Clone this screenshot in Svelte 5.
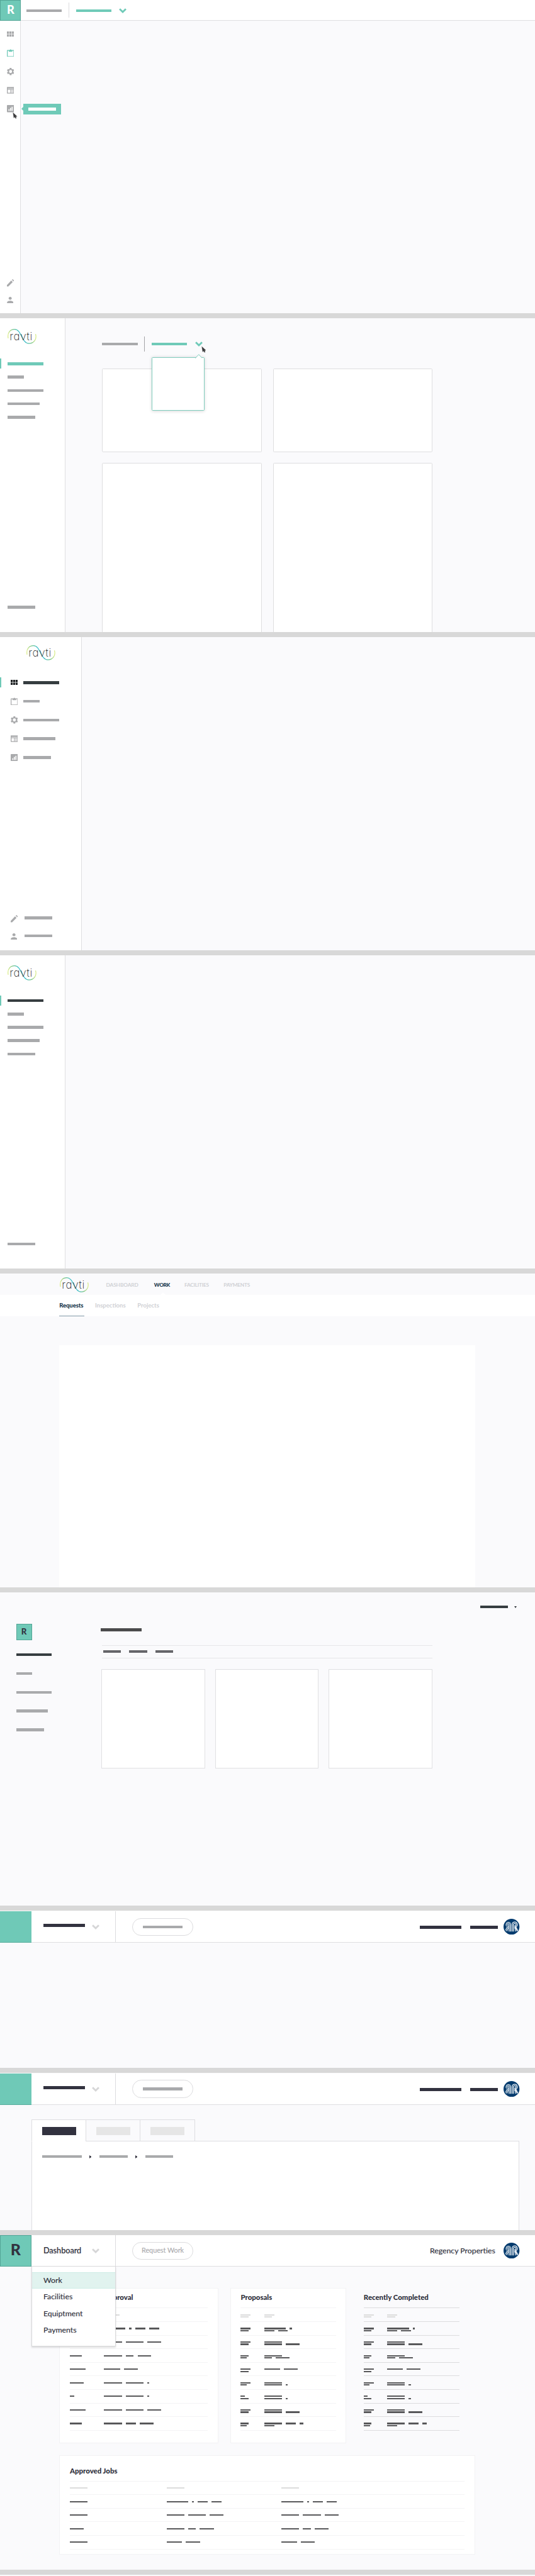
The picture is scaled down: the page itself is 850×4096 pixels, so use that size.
<script>
  const navWidths = [68, 31, 68, 61, 53];
  const navIcons = ['grid', 'clipboard', 'gear', 'web', 'chart'];

  // Each cell is a list of lines, each line a list of word widths.
  const wait = [
    [[[22]], [[41, 4, 19, 19.5]]],
    [[[30]], [[34, 34, 27]]],
    [[[22.5]], [[34, 15.5, 26.5]]],
    [[[30]], [[30.5, 26.5]]],
    [[[26.5]], [[34, 34, 4]]],
    [[[8]], [[34, 34, 4]]],
    [[[30.5]], [[34, 34, 27]]],
    [[[22.5]], [[34, 19.5, 26.5]]]
  ];
  const proposals = [
    [[[19], [15]], [[41.5, 4], [19, 19]]],
    [[[19], [15]], [[34], [34, 26.5]]],
    [[[15], [11.5]], [[34], [15, 26.5]]],
    [[[19], [15]], [[30, 26.5]]],
    [[[19], [11.5]], [[34], [34, 4]]],
    [[[7.5], [15]], [[34], [34, 4]]],
    [[[19], [15]], [[34], [34, 26.5]]],
    [[[15], [12]], [[34, 19, 7.5], [19]]]
  ];
  const jobs = [
    [[[34]], [[41.5, 4, 19, 19]], [[41.5, 4, 19, 19]]],
    [[[34]], [[34, 34, 27]], [[34, 34, 27]]],
    [[[26.5]], [[34, 15, 27]], [[34, 15, 27]]],
    [[[34]], [[30, 27]], [[30, 27]]]
  ];
  const waitHead = [[[30]], [[30]]];
  const pairHead = [[[19], [15]], [[19], [15]]];
  const jobsHead = [[[34]], [[34]], [[34]]];
</script>

{#snippet bar(w, tone = 'grey')}
  <span class="bar {tone}" style="width:{w}px"></span>
{/snippet}

{#snippet icon(name)}
  {#if name === 'grid'}
    <svg class="icon" width="13.5" height="10" viewBox="4 5 17 13" preserveAspectRatio="none"><path d="M4 11h5V5H4v6zm0 7h5v-6H4v6zm6 0h5v-6h-5v6zm6 0h5v-6h-5v6zm-6-7h5V5h-5v6zm6-6v6h5V5h-5z" /></svg>
  {:else if name === 'clipboard'}
    <svg class="icon" width="14" height="15" viewBox="0 0 14 15"><path fill-rule="evenodd" d="M1 1.8h4.4a1.7 1.7 0 0 1 3.2 0H13a1 1 0 0 1 1 1V14a1 1 0 0 1-1 1H1a1 1 0 0 1-1-1V2.8a1 1 0 0 1 1-1zM1.5 3.3v10.2h11V3.3h-1.7L10 5H4l-.8-1.7z" /></svg>
  {:else if name === 'gear'}
    <svg class="icon" width="14" height="14" viewBox="2 2 20 20"><path d="M19.43 12.98c.04-.32.07-.64.07-.98s-.03-.66-.07-.98l2.11-1.65c.19-.15.24-.42.12-.64l-2-3.46c-.12-.22-.39-.3-.61-.22l-2.49 1c-.52-.4-1.08-.73-1.69-.98l-.38-2.65C14.46 2.18 14.25 2 14 2h-4c-.25 0-.46.18-.49.42l-.38 2.65c-.61.25-1.17.59-1.69.98l-2.49-1c-.23-.09-.49 0-.61.22l-2 3.46c-.13.22-.07.49.12.64l2.11 1.65c-.04.32-.07.65-.07.98s.03.66.07.98l-2.11 1.65c-.19.15-.24.42-.12.64l2 3.46c.12.22.39.3.61.22l2.49-1c.52.4 1.08.73 1.69.98l.38 2.65c.03.24.24.42.49.42h4c.25 0 .46-.18.49-.42l.38-2.65c.61-.25 1.17-.59 1.69-.98l2.49 1c.23.09.49 0 .61-.22l2-3.46c.12-.22.07-.49-.12-.64l-2.11-1.65zM12 16.2a4.2 4.2 0 1 1 0-8.4 4.2 4.2 0 0 1 0 8.4z" /></svg>
  {:else if name === 'web'}
    <svg class="icon" width="14" height="13" viewBox="0 0 14 13"><path fill-rule="evenodd" d="M0 1 1.2 0l1.1 1 1.2-1 1.2 1L5.8 0 7 1l1.2-1 1.2 1 1.1-1 1.2 1 1.1-1L14 1v11.2a.8.8 0 0 1-.8.8H.8a.8.8 0 0 1-.8-.8zM1.6 3.2v1.3h10.8V3.2zM1.6 5.8v5.6h4.9V5.8zM7.5 5.8v5.6h4.9V5.8z" /><path opacity=".4" d="M1.6 3.2h10.8v1.3H1.6zM7.5 5.8h4.9v5.6H7.5z" /></svg>
  {:else if name === 'chart'}
    <svg class="icon" width="14" height="14" viewBox="0 0 14 14"><path fill-rule="evenodd" d="M1.2 0h11.6A1.2 1.2 0 0 1 14 1.2v11.6a1.2 1.2 0 0 1-1.2 1.2H1.2A1.2 1.2 0 0 1 0 12.8V1.2A1.2 1.2 0 0 1 1.2 0zM3 8v3.2h2V8zm3-2.5v5.7h2V5.5zM9 3.3v7.9h2V3.3z" /></svg>
  {:else if name === 'pencil'}
    <svg class="icon" width="13.5" height="14" viewBox="3 3 18 18" preserveAspectRatio="none"><path d="M3 17.25V21h3.75L17.81 9.94l-3.75-3.75L3 17.25zM20.71 7.04c.39-.39.39-1.02 0-1.41l-2.34-2.34c-.39-.39-1.02-.39-1.41 0l-1.2 1.2 3.75 3.75 1.2-1.2z" /></svg>
  {:else if name === 'user'}
    <svg class="icon" width="12.5" height="12" viewBox="4 4 16 16"><path d="M12 11.5c2.21 0 4-1.6 4-3.7S14.21 4 12 4 8 5.7 8 7.8s1.79 3.7 4 3.7zm0 2.5c-2.67 0-8 1.34-8 4v2h16v-2c0-2.66-5.33-4-8-4z" /></svg>
  {/if}
{/snippet}

{#snippet chevron(kind)}
  <svg class="chev {kind}" width="14.5" height="10" viewBox="0 0 14.5 10"><path d="M1.3 1.6 7.25 7.3l5.95-5.7" fill="none" stroke-width="3.4" /></svg>
{/snippet}

{#snippet cursor()}
  <svg width="9.5" height="13" viewBox="0 0 9.5 13"><path fill="#3b3b3d" stroke="#fff" stroke-width=".5" d="M.3.3 2 12.1l2.1-1.9 1.2 2.5 2.3-.3-.7-3.2 2.3-.6z" /></svg>
{/snippet}

{#snippet logo(id)}
  <svg class="logo" width="55.5" height="29" viewBox="0 0 55.5 29">
    <defs>
      <linearGradient id="sw{id}" x1="0" x2="1" y1="0" y2="0">
        <stop offset="0" stop-color="#dcec86" />
        <stop offset=".14" stop-color="#7cc57f" />
        <stop offset=".38" stop-color="#3cbfcc" />
        <stop offset=".62" stop-color="#38bbc8" />
        <stop offset=".86" stop-color="#7cc57f" />
        <stop offset="1" stop-color="#dcec86" />
      </linearGradient>
    </defs>
    <path d="M1.2 18C-1 6 6 .9 13.500.9 27 .9 27 28 41 28c8 0 16-7 12.600-18" fill="none" stroke="url(#sw{id})" stroke-width="1.5" />
    <text x="4" y="21.2" textLength="43.5" lengthAdjust="spacing">ravti</text>
  </svg>
{/snippet}

{#snippet crest()}
  <svg class="crest" width="30.5" height="30.5" viewBox="0 0 30 30">
    <circle cx="15" cy="15" r="15" fill="#023a6d" />
    <g fill="none" stroke="#e8eef4" stroke-width="1.15">
      <path d="M13.9 24V11a4.7 4.7 0 0 0-9.4 0c0 2 1 3.3 2.3 4.1L3.5 21.5M12.1 24V11a2.9 2.9 0 0 0-5.8 0c0 1.7 1.3 2.9 2.9 2.9L4.6 23M10.3 24V11a1.1 1.1 0 1 0-1.3 1.1M10 15.5 6.5 23.5" />
      <path stroke-width="1.5" d="M16.3 24V11a4.8 4.8 0 1 1 7 4.2l3.5 7.3M18.7 24V11a2.4 2.4 0 1 1 2.4 2.5l4.7 10M20.6 16l1.4 3 .8 4.8" />
    </g>
  </svg>
{/snippet}

{#snippet sideNav(first)}
  <aside class="side narrow">
    <div class="logo-slot">{@render logo(first)}</div>
    <nav>
      {#each navWidths as w, i}
        <div class="nav-item" class:on={i === 0}>{@render bar(w, i === 0 ? first : 'grey')}</div>
      {/each}
    </nav>
    <div class="side-foot">{@render bar(53)}</div>
  </aside>
{/snippet}

{#snippet barHeader()}
  <header class="top">
    <div class="tile"></div>
    <div class="switch">{@render bar(79.5, 'ink')}{@render chevron('pale')}</div>
    <div class="pill">{@render bar(75.5)}</div>
    <div class="who">{@render bar(79.5, 'ink')}{@render bar(53, 'ink')}{@render crest()}</div>
  </header>
{/snippet}

{#snippet row(cells, tone)}
  <div class="row">
    {#each cells as lines}
      <div class="cell">
        {#each lines as words}
          <div class="line">
            {#each words as w}<i class={tone} style="width:{w}px"></i>{/each}
          </div>
        {/each}
      </div>
    {/each}
  </div>
{/snippet}

{#snippet table(head, rows)}
  <div class="table">
    {@render row(head, 'faint')}
    {#each rows as r}{@render row(r, 'dark')}{/each}
  </div>
{/snippet}

<main>
  <!-- Icon rail with tooltip -->
  <section class="frame f1">
    <header class="f1-head">
      <div class="brand">R</div>
      <div class="crumb">{@render bar(68)}</div>
      <div class="crumb sel">{@render bar(68, 'green')}{@render chevron('green')}</div>
    </header>
    <aside class="rail">
      <div class="rail-top">
        {#each navIcons as name}
          <span class="rail-icon" class:active={name === 'clipboard'}>{@render icon(name)}</span>
        {/each}
      </div>
      <div class="rail-foot">{@render icon('pencil')}{@render icon('user')}</div>
      <div class="tip">{@render bar(53.5, 'white')}</div>
      <div class="ptr">{@render cursor()}</div>
    </aside>
  </section>

  <!-- Sidebar with popover and cards -->
  <section class="frame f2">
    {@render sideNav('green')}
    <div class="f2-main">
      <div class="f2-head">
        {@render bar(68)}
        <span class="sep"></span>
        <div class="picker">
          {@render bar(68, 'green')}{@render chevron('green')}
          <div class="pop">
            <svg width="14" height="8" viewBox="0 0 14 8"><path d="M0 7.5h.8L7 .8l6.2 6.7h.8" fill="#fff" stroke="#7fcdbd" stroke-width="1.2" /></svg>
          </div>
          <div class="ptr2">{@render cursor()}</div>
        </div>
      </div>
      <div class="f2-grid"><div></div><div></div><div></div><div></div></div>
    </div>
  </section>

  <!-- Wide sidebar -->
  <section class="frame">
    <aside class="side wide">
      <div class="logo-slot">{@render logo('wide')}</div>
      <nav>
        {#each navWidths as w, i}
          <div class="icon-row" class:on={i === 0}><span class="ic">{@render icon(navIcons[i])}</span>{@render bar(w, i === 0 ? 'slate' : 'grey')}</div>
        {/each}
      </nav>
      <div class="wide-foot">
        <div>{@render icon('pencil')}{@render bar(53)}</div>
        <div>{@render icon('user')}{@render bar(53)}</div>
      </div>
    </aside>
  </section>

  <!-- Text-only sidebar -->
  <section class="frame">{@render sideNav('slate')}</section>

  <!-- Two-level top navigation -->
  <section class="frame f5">
    <header class="f5-head">
      {@render logo('top')}
      <nav><span class="n1">DASHBOARD</span><span class="n2 cur">WORK</span><span class="n3">FACILITIES</span><span class="n4">PAYMENTS</span></nav>
    </header>
    <nav class="sub"><span class="s1 cur">Requests</span><span class="s2">Inspections</span><span>Projects</span></nav>
    <div class="sheet"></div>
  </section>

  <!-- Borderless layout -->
  <section class="frame f6">
    <div class="account">{@render bar(53, 'slate')}<span class="tri"></span></div>
    <div class="f6-body">
      <aside>
        <div class="badge">R</div>
        {#each navWidths as w, i}{@render bar(w, i === 0 ? 'slate' : 'grey')}{/each}
      </aside>
      <div class="f6-main">
        {@render bar(79, 'char')}
        <div class="f6-tabs"><i></i><i></i><i></i></div>
        <div class="f6-cards"><div></div><div></div><div></div></div>
      </div>
    </div>
  </section>

  <!-- Top bar -->
  <section class="frame f7">{@render barHeader()}</section>

  <!-- Top bar with tabs -->
  <section class="frame f8">
    {@render barHeader()}
    <div class="tabs">
      <div class="tab cur"><i></i></div><div class="tab"><i></i></div><div class="tab"><i></i></div><span class="rest"></span>
    </div>
    <div class="panel">
      {@render bar(76.5)}<span class="arr"></span>{@render bar(54)}<span class="arr"></span>{@render bar(53.5)}
    </div>
  </section>

  <!-- Dashboard -->
  <section class="frame f9">
    <header class="top">
      <div class="tile letter">R</div>
      <div class="switch">
        <span class="t-dash">Dashboard</span>{@render chevron('pale')}
        <div class="menu">
          <span class="hot">Work</span><span>Facilities</span><span>Equiptment</span><span>Payments</span>
        </div>
      </div>
      <div class="pill"><span class="t-req">Request Work</span></div>
      <div class="who"><span class="t-reg">Regency Properties</span>{@render crest()}</div>
    </header>
    <div class="trio">
      <div class="card c1"><h2>Waiting Approval</h2>{@render table(waitHead, wait)}</div>
      <div class="card c2"><h2>Proposals</h2>{@render table(pairHead, proposals)}</div>
      <div class="card c3"><h2>Recently Completed</h2>{@render table(pairHead, proposals)}</div>
    </div>
    <div class="card c4"><h2>Approved Jobs</h2>{@render table(jobsHead, jobs)}</div>
  </section>
</main>

<style>
  :global(body) { margin: 0; background: #fafafc; }
  main {
    zoom: 0.83008;
    width: 1024px;
    height: 4934px;
    overflow: hidden;
    background: #fafafc;
    font-family: Lato, "Liberation Sans", sans-serif;
    color: #2f303c;
  }
  main :global(*) { box-sizing: border-box; }
  svg { display: block; flex: none; }

  .frame { height: 610px; border-bottom: 10px solid #d8d8d8; overflow: hidden; position: relative; display: flex; }

  .bar { display: block; flex: none; height: 5.5px; background: #a9aaac; }
  .bar.green { background: #6fcab8; }
  .bar.slate { background: #363d40; }
  .bar.ink { background: #32323f; height: 6px; }
  .bar.char { background: #4b4b4c; height: 6px; }
  .bar.white { background: #fff; }
  .icon { fill: #a9aaac; }
  .chev path { stroke: #6fcab8; }
  .chev.pale path { stroke: #d6d6d7; }
  .logo text { font-family: Inter, Lato, sans-serif; font-weight: 200; font-size: 20.5px; font-feature-settings: "cv11"; fill: #1c1c1e; }

  /* icon rail */
  .f1 { flex-direction: column; }
  .f1-head { height: 40px; flex: none; display: flex; align-items: stretch; background: #fff; border-bottom: 1px solid #dfdfe1; }
  .brand { width: 40px; height: 40px; border: 2px solid #53a596; background: #6fc9b7; color: #fff; font: 900 22px/35px Lato, sans-serif; text-align: center; padding-left: 1px; }
  .crumb { display: flex; align-items: center; padding: 2px 0 0 10px; }
  .crumb.sel { margin: 5px 0 5px 13px; padding: 2px 0 0 13px; border-left: 1px solid #dcdcde; gap: 15px; }
  .rail { position: relative; flex: 1; width: 40px; background: #fff; border-right: 1px solid #dfdfe1; display: flex; flex-direction: column; justify-content: space-between; padding: 18px 0 19.5px 13px; }
  .rail-top { display: flex; flex-direction: column; gap: 20.8px; }
  .rail-icon { height: 15px; display: flex; align-items: center; }
  .active .icon { fill: #6fc9b7; }
  .rail-foot { display: flex; flex-direction: column; gap: 20px; }
  .tip { position: absolute; left: 45px; top: 159px; width: 72px; height: 20px; background: #6fcab8; display: flex; align-items: center; padding-left: 9px; }
  .tip::before { content: ""; position: absolute; left: -4px; top: 6px; border: 4px solid transparent; border-left: 0; border-right-color: #6fcab8; }
  .ptr { position: absolute; left: 24.5px; top: 174.5px; }

  /* sidebars */
  .side { flex: none; background: #fff; border-right: 1px solid #dfdfe1; display: flex; flex-direction: column; }
  .narrow { width: 125px; }
  .narrow .logo-slot { padding: 19.5px 0 0 15px; height: 77px; }
  .nav-item { height: 19px; display: flex; align-items: center; padding: .6px 0 0 15px; margin-bottom: 6.6px; }
  .nav-item.on { border-left: 2.5px solid #6fc9b7; padding-left: 12.5px; }
  .side-foot { margin-top: auto; padding: 0 0 44.6px 15px; }
  .wide { width: 157px; }
  .wide .logo-slot { padding: 15.5px 0 0 50px; height: 78px; }
  .icon-row { height: 19px; display: flex; align-items: center; gap: 11px; padding-left: 20px; margin-bottom: 16.9px; }
  .icon-row.on { border-left: 2.5px solid #6fc9b7; padding-left: 17.5px; }
  .icon-row.on .icon { fill: #1d2022; }
  .icon-row.on .bar { margin-top: 1px; }
  .ic { width: 14px; }
  .wide-foot { margin-top: auto; padding: 0 0 19px 20.5px; display: grid; gap: 20px; }
  .wide-foot div { display: flex; align-items: center; gap: 13px; height: 14px; }
  .wide-foot .bar { margin-top: -4px; }
  .wide-foot div + div .bar { margin-left: 1px; }

  /* popover and cards */
  .f2-main { flex: 1; padding: 34.5px 0 0 70.5px; display: flex; flex-direction: column; }
  .f2-head { display: flex; align-items: center; height: 30px; margin-bottom: 32.5px; }
  .sep { width: 1px; height: 29px; background: #a3a3a6; margin: 0 13px 0 12.5px; }
  .picker { position: relative; display: flex; align-items: center; gap: 15px; }
  .pop { position: absolute; left: 0; top: 30.5px; width: 102px; height: 102px; background: #fff; border: 1px solid #7fcdbd; border-radius: 2px; box-shadow: 0 1px 6px rgba(0,0,0,.16); }
  .pop svg { position: absolute; left: 82px; top: -7.5px; }
  .ptr2 { position: absolute; left: 95px; top: 9px; }
  .f2-grid { display: grid; grid-template-columns: 305.5px 305.5px; grid-template-rows: 160px 340px; gap: 20.5px 21.5px; }
  .f2-grid div { background: #fff; border: 1px solid #dedee0; border-radius: 2px; }

  /* two-level navigation */
  .f5 { flex-direction: column; }
  .f5-head { height: 41px; flex: none; display: flex; padding: 6.5px 0 0 114.5px; }
  .f5-head nav { display: flex; padding: 8.8px 0 0 33px; font: 700 10px/14px Lato, sans-serif; color: #d0d1d5; }
  .n1 { width: 92px; letter-spacing: -.12px; }
  .n2 { width: 58px; }
  .n3 { width: 75px; letter-spacing: -.3px; }
  .n4 { letter-spacing: -.3px; }
  .cur { color: #17364a; }
  .n2 { position: relative; font-weight: 900; letter-spacing: -.4px; }
  .n2::after { content: ""; position: absolute; left: 12px; top: 21px; border: 5px solid transparent; border-top: 0; border-bottom-color: #fff; }
  .sub { height: 40px; flex: none; background: #fff; display: flex; padding-left: 113.5px; font: 700 11.5px/41px Lato, sans-serif; color: #d0d1d5; }
  .sub span { height: 40.5px; }
  .s1 { border-bottom: 2px solid #8199a6; width: 48.5px; margin-right: 20px; letter-spacing: -.1px; font-weight: 900; }
  .s2 { width: 81px; }
  .sheet { margin: 55.5px 0 0 113.5px; width: 796.5px; flex: 1; background: #fff; }

  /* borderless layout */
  .f6 { flex-direction: column; }
  .account { display: flex; align-items: center; gap: 12.5px; padding: 25px 0 0 919px; height: 31px; flex: none; }
  .tri { border: 3px solid transparent; border-top: 4.5px solid #363d40; border-bottom: 0; margin-top: 2px; }
  .f6-body { display: flex; padding: 29.5px 0 0 31px; }
  .f6-body aside { width: 161.5px; display: flex; flex-direction: column; gap: 30.5px; }
  .badge { width: 30px; height: 31px; margin-bottom: -5px; border: 1.5px solid #53a596; background: #6fc9b7; color: #32323f; font: 900 16px/28px Lato, sans-serif; text-align: center; }
  .f6-main { padding-top: 9px; }
  .f6-tabs { margin: 26px 0 0 3px; width: 632px; height: 25px; border: solid #e6e6e8; border-width: 1.5px 0; display: flex; gap: 16px; padding: 9px 0 0 2px; }
  .f6-tabs i { width: 34px; height: 4px; background: #66666a; }
  .f6-cards { display: grid; grid-template-columns: repeat(3, 198px); gap: 19.5px; margin: 21px 0 0 2px; }
  .f6-cards div { height: 190px; background: #fff; border: 1px solid #e0e0e3; }

  /* shared top bar */
  .top { height: 60.5px; flex: none; background: #fff; border-bottom: 1px solid #dfdfe1; display: flex; }
  .tile { width: 60px; height: 60.5px; background: #6fc9b7; border-bottom: 1px solid #58ad9c; }
  .tile.letter { border: 2px solid #53a596; font: 900 30px/51px Lato, sans-serif; color: #32323f; text-align: center; height: 60px; }
  .switch { position: relative; width: 161.5px; border-right: 1px solid #dcdcde; display: flex; padding-left: 23px; align-items: flex-start; }
  .switch .bar { margin: 25px 13.5px 0 0; }
  .switch .chev { margin-top: 25.5px; }
  .pill { width: 117px; height: 34.5px; margin: 13px 0 0 31.5px; border: 1px solid #dcdcde; border-radius: 18px; display: flex; align-items: center; justify-content: center; }
  .who { margin-left: auto; padding-right: 29.5px; display: flex; align-items: center; }
  .who .bar { margin: 2px 17px 0 0; }
  .who .bar + .bar { margin-right: 11px; }
  .f7 { height: 311px; flex-direction: column; padding-top: .8px; }
  .f8 { height: 310.5px; flex-direction: column; padding-top: .5px; }

  .tabs { display: flex; margin: 28.5px 30px 0 60px; flex: none; height: 42px; }
  .tab { width: 104px; border: solid #dedee1; border-width: 1px 0 1px 1px; display: flex; padding: 13px 0 0 19px; }
  .tab i { width: 65px; height: 15.5px; background: #e6e6e6; }
  .tab.cur { background: #fff; border-bottom-color: #fff; }
  .tab.cur i { background: #32323f; }
  .rest { flex: 1; border: solid #dedee1; border-width: 0 0 1px 1px; }
  .panel { margin: 0 30px 0 60px; flex: 1; background: #fff; border: solid #dedee1; border-width: 0 1px; display: flex; padding: 26px 0 0 19px; }
  .arr { margin: 0 15.5px 0 14.5px; height: 6px; border: 3px solid transparent; border-left: 4px solid #32323f; border-right: 0; }

  /* dashboard */
  .f9 { height: 651px; flex-direction: column; }
  .t-dash { width: 92.5px; font: 500 15.2px/24px Lato, sans-serif; padding-top: 18px; -webkit-text-stroke: .2px; }
  .t-req { font: 13px/18px Lato, sans-serif; color: #adadb0; white-space: nowrap; margin-top: -2px; -webkit-text-stroke: .2px; }
  .t-reg { font: 14.8px/20px Lato, sans-serif; margin: 3px 16px 0 0; white-space: nowrap; -webkit-text-stroke: .2px; }
  .menu { position: absolute; z-index: 2; left: 0; top: 59.5px; width: 162px; height: 154px; background: #fff; border: 1px solid #d9d9db; box-shadow: 0 2px 3px rgba(0,0,0,.13); padding-top: 10px; display: flex; flex-direction: column; }
  .menu span { height: 32px; line-height: 31px; padding-left: 22px; font-size: 14.8px; -webkit-text-stroke: .2px; }
  .menu .hot { background: #e1f3ef; box-shadow: inset 0 1px #c6eae2, inset 0 -1px #c6eae2; }
  .trio { display: flex; padding: 40.5px 0 0 113.5px; }
  .card { background: #fff; border: 1px solid #f2f2f4; }
  .trio .card { height: 298px; padding: 0 19px; }
  .c1 { width: 304.5px; margin-right: 22.5px; }
  .c2 { width: 222.5px; margin-right: 13px; }
  .trio .c3 { width: 224px; background: none; border-color: transparent; }
  h2 { margin: 0; height: 37px; padding-top: 8px; font: 900 13.8px/20px Lato, sans-serif; white-space: nowrap; }
  .c1 h2 { text-align: right; padding-right: 143px; }
  .c4 { margin: 22.5px 0 0 113.5px; width: 796px; height: 191px; padding: 0 19px; }
  .c4 h2 { height: 48px; padding-top: 19.5px; }
  .table { border-bottom: 1.2px solid #f4f4f5; }
  .row { height: 26px; border-top: 1.2px solid #f4f4f5; display: grid; grid-template-columns: 65.5px auto; justify-content: start; padding-top: 11.3px; }
  .c2 .row, .c3 .row { grid-template-columns: 45px auto; }
  .c4 .row { grid-template-columns: 185px 220px auto; }
  .c3 .table, .c3 .row { border-color: #dcdcde; }
  .cell { display: flex; flex-direction: column; gap: 1.6px; }
  .line { display: flex; gap: 7.3px; height: 2.6px; }
  .line i { height: 2.6px; background: #58585a; }
  .line i.faint { background: #dcdcdc; }
</style>
